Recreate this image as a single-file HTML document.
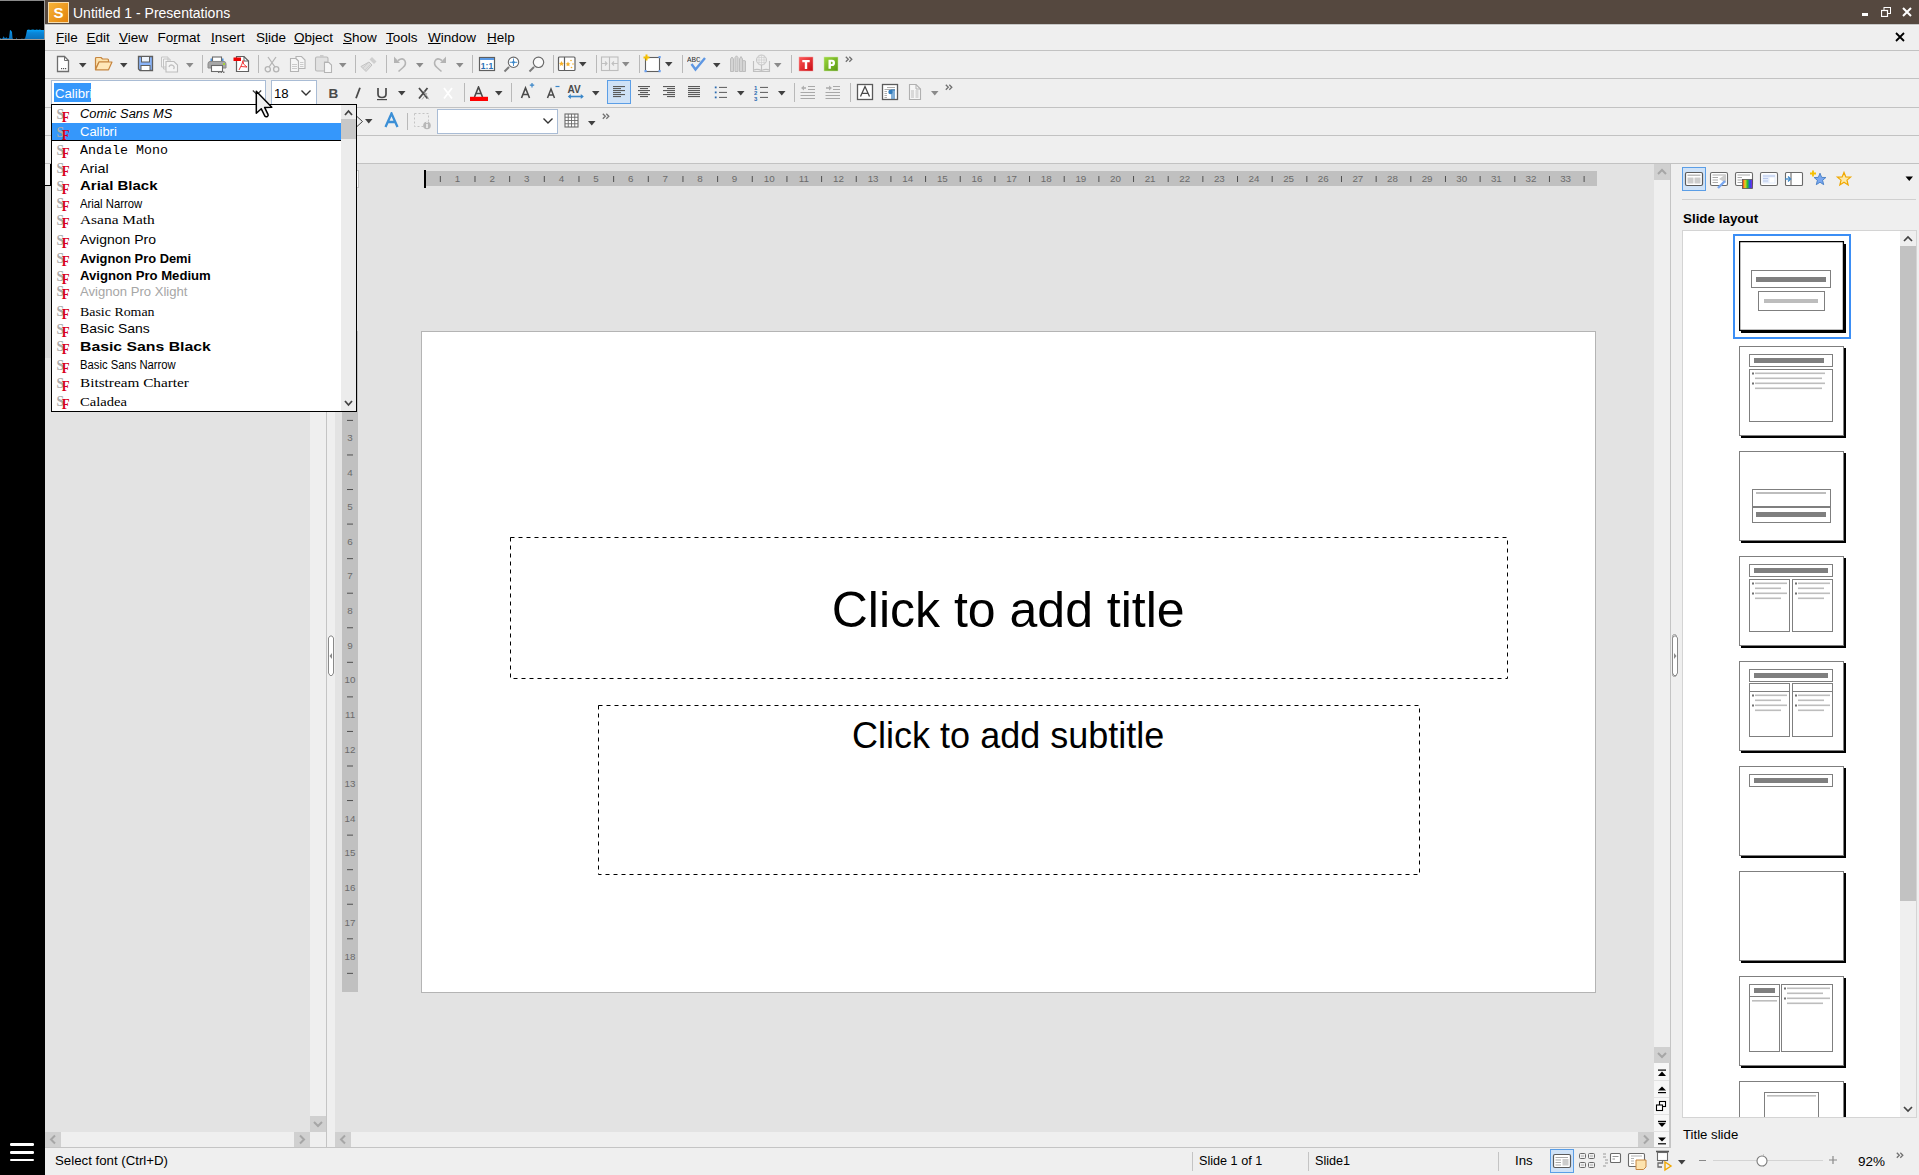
<!DOCTYPE html>
<html><head><meta charset="utf-8"><style>
html,body{margin:0;padding:0;}
body{width:1919px;height:1175px;position:relative;overflow:hidden;background:#efefef;font-family:"Liberation Sans",sans-serif;}
</style></head><body>
<div style="position:absolute;left:0px;top:0px;width:45px;height:1175px;background:#000"></div>
<svg style="position:absolute;left:0px;top:0px;" width="45" height="40" viewBox="0 0 45 40"><defs><linearGradient id="gg" x1="0" y1="0" x2="0" y2="1"><stop offset="0" stop-color="#05a8ff"/><stop offset="0.35" stop-color="#0a86d8"/><stop offset="1" stop-color="#0a72bc"/></linearGradient></defs><rect x="0" y="0" width="45" height="1" fill="#8a8a8a"/><rect x="44" y="0" width="1" height="40" fill="#9a9a9a"/><rect x="0" y="39" width="45" height="1" fill="#a09a94"/><path d="M0 39 L0 38 L1 38.5 L2 39 L3 37.5 L3.5 36 L4 37.5 L6 38 L6.5 37 L7.5 38.5 L9 38 L10 30 L11 30.5 L12 32 L12.5 38 L13 39 L16 39 L16.5 37.5 L17 39 L21 39 L22 38.5 L23 39 L25 38.5 L26 35 L27 30 L29 29.5 L30 30 L33 29.5 L35 30 L37 29.5 L38 30 L40 29.5 L41 30 L44 30 L44 39 Z" fill="url(#gg)"/></svg>
<div style="position:absolute;left:10px;top:1143px;width:24px;height:2.6px;background:#fff;border-radius:1.3px"></div>
<div style="position:absolute;left:10px;top:1151px;width:24px;height:2.6px;background:#fff;border-radius:1.3px"></div>
<div style="position:absolute;left:10px;top:1158.5px;width:24px;height:2.6px;background:#fff;border-radius:1.3px"></div>
<div style="position:absolute;left:45px;top:0px;width:1874px;height:24px;background:#55483f"></div>
<svg style="position:absolute;left:48px;top:2px;" width="21" height="21" viewBox="0 0 21 21"><defs><linearGradient id="sg" x1="0" y1="0" x2="1" y2="1"><stop offset="0" stop-color="#f7b43a"/><stop offset="1" stop-color="#e2820a"/></linearGradient></defs><rect x="0.5" y="0.5" width="20" height="20" fill="url(#sg)" stroke="#f5dcae"/><text x="10.5" y="16" text-anchor="middle" font-family="Liberation Sans" font-weight="bold" font-size="15" fill="#fff">S</text></svg>
<div style="position:absolute;left:73px;top:5.5px;font-size:14px;line-height:14px;color:#fff;white-space:nowrap;">Untitled 1 - Presentations</div>
<div style="position:absolute;left:1862px;top:13px;width:6px;height:3px;background:#fff"></div>
<svg style="position:absolute;left:1881px;top:7px;" width="10" height="10" viewBox="0 0 10 10"><rect x="3" y="0.5" width="6.5" height="6" fill="none" stroke="#fff"/><rect x="0.5" y="3.5" width="6" height="6" fill="#55483f" stroke="#fff" stroke-width="1.2"/></svg>
<svg style="position:absolute;left:1902px;top:7px;" width="10" height="10" viewBox="0 0 10 10"><path d="M1 1 L9 9 M9 1 L1 9" stroke="#fff" stroke-width="2"/></svg>
<div style="position:absolute;left:45px;top:24px;width:1874px;height:26px;background:#efefef"></div>
<div style="position:absolute;left:45px;top:50px;width:1874px;height:1px;background:#c2c2c2"></div>
<div style="position:absolute;left:45px;top:24px;width:1874px;height:1px;background:#c6c7c6"></div>
<div style="position:absolute;left:45px;top:25px;width:1874px;height:1px;background:#f3f3f3"></div>
<div style="position:absolute;left:56px;top:31px;font-size:13.5px;line-height:13.5px;color:#000;white-space:nowrap;"><span style="text-decoration:underline;text-underline-offset:1px">F</span>ile</div>
<div style="position:absolute;left:86.5px;top:31px;font-size:13.5px;line-height:13.5px;color:#000;white-space:nowrap;"><span style="text-decoration:underline;text-underline-offset:1px">E</span>dit</div>
<div style="position:absolute;left:119px;top:31px;font-size:13.5px;line-height:13.5px;color:#000;white-space:nowrap;"><span style="text-decoration:underline;text-underline-offset:1px">V</span>iew</div>
<div style="position:absolute;left:157.5px;top:31px;font-size:13.5px;line-height:13.5px;color:#000;white-space:nowrap;">Fo<span style="text-decoration:underline;text-underline-offset:1px">r</span>mat</div>
<div style="position:absolute;left:211px;top:31px;font-size:13.5px;line-height:13.5px;color:#000;white-space:nowrap;"><span style="text-decoration:underline;text-underline-offset:1px">I</span>nsert</div>
<div style="position:absolute;left:256px;top:31px;font-size:13.5px;line-height:13.5px;color:#000;white-space:nowrap;">S<span style="text-decoration:underline;text-underline-offset:1px">l</span>ide</div>
<div style="position:absolute;left:294px;top:31px;font-size:13.5px;line-height:13.5px;color:#000;white-space:nowrap;"><span style="text-decoration:underline;text-underline-offset:1px">O</span>bject</div>
<div style="position:absolute;left:343px;top:31px;font-size:13.5px;line-height:13.5px;color:#000;white-space:nowrap;"><span style="text-decoration:underline;text-underline-offset:1px">S</span>how</div>
<div style="position:absolute;left:386px;top:31px;font-size:13.5px;line-height:13.5px;color:#000;white-space:nowrap;"><span style="text-decoration:underline;text-underline-offset:1px">T</span>ools</div>
<div style="position:absolute;left:428px;top:31px;font-size:13.5px;line-height:13.5px;color:#000;white-space:nowrap;"><span style="text-decoration:underline;text-underline-offset:1px">W</span>indow</div>
<div style="position:absolute;left:487px;top:31px;font-size:13.5px;line-height:13.5px;color:#000;white-space:nowrap;"><span style="text-decoration:underline;text-underline-offset:1px">H</span>elp</div>
<svg style="position:absolute;left:1895px;top:32px;" width="10" height="10" viewBox="0 0 10 10"><path d="M1 1 L9 9 M9 1 L1 9" stroke="#000" stroke-width="1.8"/></svg>
<div style="position:absolute;left:45px;top:51px;width:1874px;height:112px;background:#efefef"></div>
<div style="position:absolute;left:45px;top:78px;width:1874px;height:1px;background:#c2c2c2"></div>
<div style="position:absolute;left:45px;top:107px;width:1874px;height:1px;background:#c2c2c2"></div>
<div style="position:absolute;left:45px;top:135px;width:1874px;height:1px;background:#c2c2c2"></div>
<div style="position:absolute;left:45px;top:163px;width:1874px;height:1px;background:#c2c2c2"></div>
<div style="position:absolute;left:45px;top:164px;width:265px;height:968px;background:#e3e3e3"></div>
<div style="position:absolute;left:45px;top:164px;width:6px;height:21px;background:#efefef"></div>
<div style="position:absolute;left:50px;top:164px;width:1px;height:22px;background:#000"></div>
<div style="position:absolute;left:45px;top:185px;width:6px;height:1px;background:#000"></div>
<div style="position:absolute;left:45px;top:186px;width:6px;height:172px;background:#d8d8d8"></div>
<div style="position:absolute;left:310px;top:164px;width:16px;height:968px;background:#efefef"></div>
<div style="position:absolute;left:310px;top:1116px;width:16px;height:16px;background:#d0d0d0"></div>
<div style="position:absolute;left:45px;top:1132px;width:265px;height:15px;background:#efefef"></div>
<div style="position:absolute;left:45px;top:1132px;width:16px;height:15px;background:#d0d0d0"></div>
<div style="position:absolute;left:294px;top:1132px;width:16px;height:15px;background:#d0d0d0"></div>
<div style="position:absolute;left:326px;top:164px;width:1px;height:984px;background:#c4c4c4"></div>
<div style="position:absolute;left:327px;top:164px;width:8px;height:984px;background:#efefef"></div>
<div style="position:absolute;left:335px;top:164px;width:1319px;height:968px;background:#e3e3e3"></div>
<div style="position:absolute;left:335px;top:1132px;width:1319px;height:15px;background:#efefef"></div>
<div style="position:absolute;left:335px;top:1132px;width:16px;height:15px;background:#d0d0d0"></div>
<div style="position:absolute;left:1638px;top:1132px;width:16px;height:15px;background:#d0d0d0"></div>
<div style="position:absolute;left:1654px;top:164px;width:16px;height:983px;background:#efefef"></div>
<div style="position:absolute;left:1654px;top:164px;width:16px;height:16px;background:#d0d0d0"></div>
<div style="position:absolute;left:1654px;top:1047px;width:16px;height:16px;background:#d0d0d0"></div>
<div style="position:absolute;left:1670px;top:164px;width:1px;height:984px;background:#c4c4c4"></div>
<div style="position:absolute;left:45px;top:1147px;width:1874px;height:1px;background:#c4c4c4"></div>
<div style="position:absolute;left:45px;top:1148px;width:1874px;height:27px;background:#efefef"></div>
<div style="position:absolute;left:426px;top:171px;width:1171px;height:15px;background:#c0c0c0"></div>
<div style="position:absolute;left:424px;top:170px;width:2px;height:18px;background:#000"></div>
<svg style="position:absolute;left:426px;top:171px;" width="1171" height="15" viewBox="0 0 1171 15"><rect x="13.83" y="5" width="1" height="6" fill="#505050"/><rect x="48.49" y="5" width="1" height="6" fill="#505050"/><rect x="83.15" y="5" width="1" height="6" fill="#505050"/><rect x="117.81" y="5" width="1" height="6" fill="#505050"/><rect x="152.47" y="5" width="1" height="6" fill="#505050"/><rect x="187.13" y="5" width="1" height="6" fill="#505050"/><rect x="221.79" y="5" width="1" height="6" fill="#505050"/><rect x="256.45" y="5" width="1" height="6" fill="#505050"/><rect x="291.11" y="5" width="1" height="6" fill="#505050"/><rect x="325.77" y="5" width="1" height="6" fill="#505050"/><rect x="360.43" y="5" width="1" height="6" fill="#505050"/><rect x="395.09" y="5" width="1" height="6" fill="#505050"/><rect x="429.75" y="5" width="1" height="6" fill="#505050"/><rect x="464.41" y="5" width="1" height="6" fill="#505050"/><rect x="499.07" y="5" width="1" height="6" fill="#505050"/><rect x="533.73" y="5" width="1" height="6" fill="#505050"/><rect x="568.39" y="5" width="1" height="6" fill="#505050"/><rect x="603.05" y="5" width="1" height="6" fill="#505050"/><rect x="637.71" y="5" width="1" height="6" fill="#505050"/><rect x="672.37" y="5" width="1" height="6" fill="#505050"/><rect x="707.03" y="5" width="1" height="6" fill="#505050"/><rect x="741.69" y="5" width="1" height="6" fill="#505050"/><rect x="776.35" y="5" width="1" height="6" fill="#505050"/><rect x="811.01" y="5" width="1" height="6" fill="#505050"/><rect x="845.67" y="5" width="1" height="6" fill="#505050"/><rect x="880.33" y="5" width="1" height="6" fill="#505050"/><rect x="914.99" y="5" width="1" height="6" fill="#505050"/><rect x="949.65" y="5" width="1" height="6" fill="#505050"/><rect x="984.31" y="5" width="1" height="6" fill="#505050"/><rect x="1018.97" y="5" width="1" height="6" fill="#505050"/><rect x="1053.63" y="5" width="1" height="6" fill="#505050"/><rect x="1088.29" y="5" width="1" height="6" fill="#505050"/><rect x="1122.95" y="5" width="1" height="6" fill="#505050"/><rect x="1157.61" y="5" width="1" height="6" fill="#505050"/><text x="31.60" y="11" text-anchor="middle" font-family="Liberation Sans" font-size="9.8" fill="#6b6b6b">1</text><text x="66.23" y="11" text-anchor="middle" font-family="Liberation Sans" font-size="9.8" fill="#6b6b6b">2</text><text x="100.85" y="11" text-anchor="middle" font-family="Liberation Sans" font-size="9.8" fill="#6b6b6b">3</text><text x="135.48" y="11" text-anchor="middle" font-family="Liberation Sans" font-size="9.8" fill="#6b6b6b">4</text><text x="170.10" y="11" text-anchor="middle" font-family="Liberation Sans" font-size="9.8" fill="#6b6b6b">5</text><text x="204.73" y="11" text-anchor="middle" font-family="Liberation Sans" font-size="9.8" fill="#6b6b6b">6</text><text x="239.35" y="11" text-anchor="middle" font-family="Liberation Sans" font-size="9.8" fill="#6b6b6b">7</text><text x="273.98" y="11" text-anchor="middle" font-family="Liberation Sans" font-size="9.8" fill="#6b6b6b">8</text><text x="308.60" y="11" text-anchor="middle" font-family="Liberation Sans" font-size="9.8" fill="#6b6b6b">9</text><text x="343.23" y="11" text-anchor="middle" font-family="Liberation Sans" font-size="9.8" fill="#6b6b6b">10</text><text x="377.85" y="11" text-anchor="middle" font-family="Liberation Sans" font-size="9.8" fill="#6b6b6b">11</text><text x="412.48" y="11" text-anchor="middle" font-family="Liberation Sans" font-size="9.8" fill="#6b6b6b">12</text><text x="447.10" y="11" text-anchor="middle" font-family="Liberation Sans" font-size="9.8" fill="#6b6b6b">13</text><text x="481.73" y="11" text-anchor="middle" font-family="Liberation Sans" font-size="9.8" fill="#6b6b6b">14</text><text x="516.35" y="11" text-anchor="middle" font-family="Liberation Sans" font-size="9.8" fill="#6b6b6b">15</text><text x="550.98" y="11" text-anchor="middle" font-family="Liberation Sans" font-size="9.8" fill="#6b6b6b">16</text><text x="585.60" y="11" text-anchor="middle" font-family="Liberation Sans" font-size="9.8" fill="#6b6b6b">17</text><text x="620.22" y="11" text-anchor="middle" font-family="Liberation Sans" font-size="9.8" fill="#6b6b6b">18</text><text x="654.85" y="11" text-anchor="middle" font-family="Liberation Sans" font-size="9.8" fill="#6b6b6b">19</text><text x="689.47" y="11" text-anchor="middle" font-family="Liberation Sans" font-size="9.8" fill="#6b6b6b">20</text><text x="724.10" y="11" text-anchor="middle" font-family="Liberation Sans" font-size="9.8" fill="#6b6b6b">21</text><text x="758.72" y="11" text-anchor="middle" font-family="Liberation Sans" font-size="9.8" fill="#6b6b6b">22</text><text x="793.35" y="11" text-anchor="middle" font-family="Liberation Sans" font-size="9.8" fill="#6b6b6b">23</text><text x="827.97" y="11" text-anchor="middle" font-family="Liberation Sans" font-size="9.8" fill="#6b6b6b">24</text><text x="862.60" y="11" text-anchor="middle" font-family="Liberation Sans" font-size="9.8" fill="#6b6b6b">25</text><text x="897.22" y="11" text-anchor="middle" font-family="Liberation Sans" font-size="9.8" fill="#6b6b6b">26</text><text x="931.85" y="11" text-anchor="middle" font-family="Liberation Sans" font-size="9.8" fill="#6b6b6b">27</text><text x="966.47" y="11" text-anchor="middle" font-family="Liberation Sans" font-size="9.8" fill="#6b6b6b">28</text><text x="1001.10" y="11" text-anchor="middle" font-family="Liberation Sans" font-size="9.8" fill="#6b6b6b">29</text><text x="1035.72" y="11" text-anchor="middle" font-family="Liberation Sans" font-size="9.8" fill="#6b6b6b">30</text><text x="1070.35" y="11" text-anchor="middle" font-family="Liberation Sans" font-size="9.8" fill="#6b6b6b">31</text><text x="1104.97" y="11" text-anchor="middle" font-family="Liberation Sans" font-size="9.8" fill="#6b6b6b">32</text><text x="1139.60" y="11" text-anchor="middle" font-family="Liberation Sans" font-size="9.8" fill="#6b6b6b">33</text></svg>
<div style="position:absolute;left:356.5px;top:170px;width:2.5px;height:18px;background:#fff;border:1px solid #c0c0c0;border-left:none;box-sizing:border-box"></div>
<div style="position:absolute;left:342px;top:331px;width:16px;height:661px;background:#c0c0c0"></div>
<svg style="position:absolute;left:342px;top:331px;" width="16" height="661" viewBox="0 0 16 661"><rect x="5" y="19.78" width="6" height="1" fill="#505050"/><rect x="5" y="54.34" width="6" height="1" fill="#505050"/><rect x="5" y="88.90" width="6" height="1" fill="#505050"/><rect x="5" y="123.46" width="6" height="1" fill="#505050"/><rect x="5" y="158.02" width="6" height="1" fill="#505050"/><rect x="5" y="192.58" width="6" height="1" fill="#505050"/><rect x="5" y="227.14" width="6" height="1" fill="#505050"/><rect x="5" y="261.70" width="6" height="1" fill="#505050"/><rect x="5" y="296.26" width="6" height="1" fill="#505050"/><rect x="5" y="330.82" width="6" height="1" fill="#505050"/><rect x="5" y="365.38" width="6" height="1" fill="#505050"/><rect x="5" y="399.94" width="6" height="1" fill="#505050"/><rect x="5" y="434.50" width="6" height="1" fill="#505050"/><rect x="5" y="469.06" width="6" height="1" fill="#505050"/><rect x="5" y="503.62" width="6" height="1" fill="#505050"/><rect x="5" y="538.18" width="6" height="1" fill="#505050"/><rect x="5" y="572.74" width="6" height="1" fill="#505050"/><rect x="5" y="607.30" width="6" height="1" fill="#505050"/><rect x="5" y="641.86" width="6" height="1" fill="#505050"/><text x="8" y="40.76" text-anchor="middle" font-family="Liberation Sans" font-size="9.8" fill="#6b6b6b">1</text><text x="8" y="75.38" text-anchor="middle" font-family="Liberation Sans" font-size="9.8" fill="#6b6b6b">2</text><text x="8" y="110.00" text-anchor="middle" font-family="Liberation Sans" font-size="9.8" fill="#6b6b6b">3</text><text x="8" y="144.62" text-anchor="middle" font-family="Liberation Sans" font-size="9.8" fill="#6b6b6b">4</text><text x="8" y="179.24" text-anchor="middle" font-family="Liberation Sans" font-size="9.8" fill="#6b6b6b">5</text><text x="8" y="213.86" text-anchor="middle" font-family="Liberation Sans" font-size="9.8" fill="#6b6b6b">6</text><text x="8" y="248.48" text-anchor="middle" font-family="Liberation Sans" font-size="9.8" fill="#6b6b6b">7</text><text x="8" y="283.10" text-anchor="middle" font-family="Liberation Sans" font-size="9.8" fill="#6b6b6b">8</text><text x="8" y="317.72" text-anchor="middle" font-family="Liberation Sans" font-size="9.8" fill="#6b6b6b">9</text><text x="8" y="352.34" text-anchor="middle" font-family="Liberation Sans" font-size="9.8" fill="#6b6b6b">10</text><text x="8" y="386.96" text-anchor="middle" font-family="Liberation Sans" font-size="9.8" fill="#6b6b6b">11</text><text x="8" y="421.58" text-anchor="middle" font-family="Liberation Sans" font-size="9.8" fill="#6b6b6b">12</text><text x="8" y="456.20" text-anchor="middle" font-family="Liberation Sans" font-size="9.8" fill="#6b6b6b">13</text><text x="8" y="490.82" text-anchor="middle" font-family="Liberation Sans" font-size="9.8" fill="#6b6b6b">14</text><text x="8" y="525.44" text-anchor="middle" font-family="Liberation Sans" font-size="9.8" fill="#6b6b6b">15</text><text x="8" y="560.06" text-anchor="middle" font-family="Liberation Sans" font-size="9.8" fill="#6b6b6b">16</text><text x="8" y="594.68" text-anchor="middle" font-family="Liberation Sans" font-size="9.8" fill="#6b6b6b">17</text><text x="8" y="629.30" text-anchor="middle" font-family="Liberation Sans" font-size="9.8" fill="#6b6b6b">18</text></svg>
<div style="position:absolute;left:421px;top:331px;width:1175px;height:662px;background:#fff;border:1px solid #b4b4b4;box-sizing:border-box"></div>
<svg style="position:absolute;left:505px;top:530px;" width="1010" height="350" viewBox="0 0 1010 350"><rect x="5.5" y="7.5" width="997" height="141" fill="none" stroke="#000" stroke-width="1" stroke-dasharray="4 4"/><rect x="93.5" y="175.5" width="821" height="169" fill="none" stroke="#000" stroke-width="1" stroke-dasharray="4 4"/></svg>
<div style="position:absolute;left:608.2px;width:800px;text-align:center;top:585.17px;font-size:50px;line-height:50px;color:#000;white-space:nowrap;">Click to add title</div>
<div style="position:absolute;left:608.2px;width:800px;text-align:center;top:717.83px;font-size:36px;line-height:36px;color:#000;white-space:nowrap;">Click to add subtitle</div>
<div style="position:absolute;left:1671px;top:164px;width:248px;height:984px;background:#efefef"></div>
<div style="position:absolute;left:1671px;top:164px;width:248px;height:984px;background:#efefef"></div>
<div style="position:absolute;left:1682px;top:167px;width:24px;height:24px;background:#cfe2f7;border:1px solid #5b9ee6;box-sizing:border-box"></div>
<svg style="position:absolute;left:1684px;top:171px;" width="20" height="17" viewBox="0 0 20 17"><rect x="1.5" y="1.5" width="17" height="13" rx="1.5" fill="#fff" stroke="#5a5a5a" stroke-width="1.2"/><rect x="3.5" y="3.5" width="13" height="1.5" fill="#bbb"/><rect x="3.5" y="6.5" width="6" height="6" fill="#ccc"/><rect x="10.5" y="6.5" width="6" height="6" fill="#ccc"/></svg>
<svg style="position:absolute;left:1709px;top:171px;" width="20" height="19" viewBox="0 0 20 19"><rect x="1.5" y="1.5" width="17" height="13" rx="1.5" fill="#fff" stroke="#6a6a6a" stroke-width="1.1"/><path d="M3.5 4 H16 M3.5 6.5 H9 M3.5 9 H9 M3.5 11.5 H9" stroke="#aaa" stroke-width="1"/><path d="M10 8 L17 3 V12 Z" fill="#ccc"/><path d="M9 17 L16 10" stroke="#7aa8f0" stroke-width="2.4"/></svg>
<svg style="position:absolute;left:1734px;top:171px;" width="20" height="19" viewBox="0 0 20 19"><rect x="1.5" y="1.5" width="17" height="13" rx="1.5" fill="#fff" stroke="#6a6a6a" stroke-width="1.1"/><path d="M3.5 4 H16 M3.5 6.5 H8 M3.5 9 H8 M3.5 11.5 H8" stroke="#aaa" stroke-width="1"/><defs><linearGradient id="rb" x1="0" x2="1"><stop offset="0" stop-color="#f02020"/><stop offset="0.25" stop-color="#f0d020"/><stop offset="0.5" stop-color="#30c030"/><stop offset="0.75" stop-color="#2050f0"/><stop offset="1" stop-color="#a020d0"/></linearGradient></defs><rect x="8.5" y="8.5" width="10" height="9" fill="url(#rb)" stroke="#555" stroke-width="0.8"/></svg>
<svg style="position:absolute;left:1759px;top:171px;" width="20" height="17" viewBox="0 0 20 17"><rect x="1.5" y="1.5" width="17" height="13" rx="1.5" fill="#fff" stroke="#6a6a6a" stroke-width="1.1"/><rect x="3.5" y="3.5" width="13" height="9" fill="#e4ecfb"/><path d="M4 5 H16 M4 7.5 H9 M4 10 H9" stroke="#b8c8ec" stroke-width="1"/><rect x="10.5" y="6.5" width="5" height="5" fill="#fff"/></svg>
<svg style="position:absolute;left:1784px;top:171px;" width="20" height="17" viewBox="0 0 20 17"><rect x="1.5" y="1.5" width="17" height="13" rx="1" fill="#fff" stroke="#6a6a6a" stroke-width="1.1"/><path d="M7 1.5 V14.5" stroke="#6a6a6a" stroke-width="1.1"/><path d="M1 8 H6" stroke="#3a86c8" stroke-width="1.3"/><path d="M4 5.5 L6.5 8 L4 10.5" fill="none" stroke="#3a86c8" stroke-width="1.3"/></svg>
<svg style="position:absolute;left:1809px;top:170px;" width="19" height="18" viewBox="0 0 19 18"><g transform="translate(11 9) scale(0.9) translate(-11 -9)"><path d="M11 2.5 L12.9 7.2 L17.5 7.4 L13.9 10.4 L15.1 15.3 L11 12.6 L6.9 15.3 L8.1 10.4 L4.5 7.4 L9.1 7.2 Z" fill="#7aa8f0" stroke="#3a76c0" stroke-width="0.9"/></g><path d="M4 0.5 V6.5 M1 3.5 H7" stroke="#f5c000" stroke-width="1.8"/></svg>
<svg style="position:absolute;left:1835px;top:170px;" width="18" height="18" viewBox="0 0 18 18"><g transform="translate(9 9) scale(0.88) translate(-9 -9)"><path d="M9 1.5 L11.1 6.6 L16.5 6.9 L12.4 10.3 L13.7 15.7 L9 12.7 L4.3 15.7 L5.6 10.3 L1.5 6.9 L6.9 6.6 Z" fill="#fde9a8" stroke="#f0a800" stroke-width="1.4"/></g></svg>
<svg style="position:absolute;left:1905px;top:176px;" width="9" height="6" viewBox="0 0 9 6"><path d="M0.5 0.5 H8 L4.25 5 Z" fill="#000"/></svg>
<div style="position:absolute;left:1682px;top:199px;width:234px;height:1px;background:#d0d0d0"></div>
<div style="position:absolute;left:1683px;top:211.56px;font-size:13.4px;line-height:13.4px;color:#000;white-space:nowrap;font-weight:bold">Slide layout</div>
<div style="position:absolute;left:1682px;top:230px;width:235px;height:888px;background:#fff;border:1px solid #d4d4d4;box-sizing:border-box"></div>
<div style="position:absolute;left:1900px;top:231px;width:16px;height:886px;background:#efefef"></div>
<div style="position:absolute;left:1900px;top:246px;width:16px;height:655px;background:#c2c2c2"></div>
<svg style="position:absolute;left:1900px;top:232px;" width="16" height="14" viewBox="0 0 16 14"><path d="M4 9 L8 5 L12 9" fill="none" stroke="#444" stroke-width="1.7"/></svg>
<svg style="position:absolute;left:1900px;top:1102px;" width="16" height="14" viewBox="0 0 16 14"><path d="M4 5 L8 9 L12 5" fill="none" stroke="#444" stroke-width="1.7"/></svg>
<div style="position:absolute;left:1683px;top:231px;width:217px;height:886px;overflow:hidden"><div style="position:absolute;left:50px;top:3px;width:118px;height:105px;border:2px solid #3b8ef5;box-sizing:border-box"></div><svg style="position:absolute;left:56px;top:10px;" width="108" height="93" viewBox="0 0 108 93"><rect x="2" y="3" width="105" height="89" fill="#000"/><rect x="0.6" y="0.6" width="103.8" height="88.8" fill="#fff" stroke="#000" stroke-width="1.3"/><rect x="12.5" y="29.5" width="79" height="17" fill="none" stroke="#7f7f7f" stroke-width="1"/><rect x="17" y="36" width="70" height="5" fill="#7f7f7f"/><rect x="19.5" y="50.5" width="66" height="19" fill="none" stroke="#7f7f7f" stroke-width="1"/><rect x="25" y="58" width="54" height="4" fill="#bdbdbd"/></svg><svg style="position:absolute;left:56px;top:115px;" width="108" height="93" viewBox="0 0 108 93"><rect x="2" y="2" width="105" height="90" fill="#000"/><rect x="0.5" y="0.5" width="104" height="89" fill="#fff" stroke="#7f7f7f" stroke-width="1"/><rect x="10.5" y="8.5" width="83" height="12" fill="none" stroke="#7f7f7f" stroke-width="1"/><rect x="15" y="12" width="70" height="5" fill="#7f7f7f"/><rect x="10.5" y="23.5" width="83" height="52" fill="none" stroke="#7f7f7f" stroke-width="1"/><rect x="13" y="26.5" width="2" height="2" fill="#707070"/><rect x="16" y="26.5" width="70" height="1.6" fill="#bdbdbd"/><rect x="16" y="31.5" width="67" height="1.6" fill="#bdbdbd"/><rect x="13" y="36.5" width="2" height="2" fill="#707070"/><rect x="16" y="36.5" width="70" height="1.6" fill="#bdbdbd"/><rect x="16" y="41.5" width="67" height="1.6" fill="#bdbdbd"/></svg><svg style="position:absolute;left:56px;top:220px;" width="108" height="93" viewBox="0 0 108 93"><rect x="2" y="2" width="105" height="90" fill="#000"/><rect x="0.5" y="0.5" width="104" height="89" fill="#fff" stroke="#7f7f7f" stroke-width="1"/><rect x="13.5" y="38.5" width="78" height="17" fill="none" stroke="#7f7f7f" stroke-width="1"/><rect x="17" y="41" width="70" height="2" fill="#bdbdbd"/><rect x="13.5" y="56.5" width="78" height="15" fill="none" stroke="#7f7f7f" stroke-width="1"/><rect x="17" y="61" width="70" height="5" fill="#7f7f7f"/></svg><svg style="position:absolute;left:56px;top:325px;" width="108" height="93" viewBox="0 0 108 93"><rect x="2" y="2" width="105" height="90" fill="#000"/><rect x="0.5" y="0.5" width="104" height="89" fill="#fff" stroke="#7f7f7f" stroke-width="1"/><rect x="10.5" y="8.5" width="83" height="12" fill="none" stroke="#7f7f7f" stroke-width="1"/><rect x="15" y="12" width="74" height="5" fill="#7f7f7f"/><rect x="10.5" y="23.5" width="40" height="52" fill="none" stroke="#7f7f7f" stroke-width="1"/><rect x="53.5" y="23.5" width="40" height="52" fill="none" stroke="#7f7f7f" stroke-width="1"/><rect x="13" y="26.5" width="2" height="2" fill="#707070"/><rect x="16" y="26.5" width="32" height="1.6" fill="#bdbdbd"/><rect x="16" y="31.5" width="26" height="1.6" fill="#bdbdbd"/><rect x="13" y="36.5" width="2" height="2" fill="#707070"/><rect x="16" y="36.5" width="32" height="1.6" fill="#bdbdbd"/><rect x="16" y="41.5" width="26" height="1.6" fill="#bdbdbd"/><rect x="56" y="26.5" width="2" height="2" fill="#707070"/><rect x="59" y="26.5" width="32" height="1.6" fill="#bdbdbd"/><rect x="59" y="31.5" width="26" height="1.6" fill="#bdbdbd"/><rect x="56" y="36.5" width="2" height="2" fill="#707070"/><rect x="59" y="36.5" width="32" height="1.6" fill="#bdbdbd"/><rect x="59" y="41.5" width="26" height="1.6" fill="#bdbdbd"/></svg><svg style="position:absolute;left:56px;top:430px;" width="108" height="93" viewBox="0 0 108 93"><rect x="2" y="2" width="105" height="90" fill="#000"/><rect x="0.5" y="0.5" width="104" height="89" fill="#fff" stroke="#7f7f7f" stroke-width="1"/><rect x="10.5" y="8.5" width="83" height="12" fill="none" stroke="#7f7f7f" stroke-width="1"/><rect x="15" y="12" width="74" height="5" fill="#7f7f7f"/><rect x="10.5" y="22.5" width="40" height="8" fill="none" stroke="#7f7f7f" stroke-width="1"/><rect x="10.5" y="30.5" width="40" height="45" fill="none" stroke="#7f7f7f" stroke-width="1"/><rect x="53.5" y="22.5" width="40" height="8" fill="none" stroke="#7f7f7f" stroke-width="1"/><rect x="53.5" y="30.5" width="40" height="45" fill="none" stroke="#7f7f7f" stroke-width="1"/><rect x="13" y="33.5" width="2" height="2" fill="#707070"/><rect x="16" y="33.5" width="32" height="1.6" fill="#bdbdbd"/><rect x="16" y="38.5" width="26" height="1.6" fill="#bdbdbd"/><rect x="13" y="43.5" width="2" height="2" fill="#707070"/><rect x="16" y="43.5" width="32" height="1.6" fill="#bdbdbd"/><rect x="16" y="48.5" width="26" height="1.6" fill="#bdbdbd"/><rect x="56" y="33.5" width="2" height="2" fill="#707070"/><rect x="59" y="33.5" width="32" height="1.6" fill="#bdbdbd"/><rect x="59" y="38.5" width="26" height="1.6" fill="#bdbdbd"/><rect x="56" y="43.5" width="2" height="2" fill="#707070"/><rect x="59" y="43.5" width="32" height="1.6" fill="#bdbdbd"/><rect x="59" y="48.5" width="26" height="1.6" fill="#bdbdbd"/></svg><svg style="position:absolute;left:56px;top:535px;" width="108" height="93" viewBox="0 0 108 93"><rect x="2" y="2" width="105" height="90" fill="#000"/><rect x="0.5" y="0.5" width="104" height="89" fill="#fff" stroke="#7f7f7f" stroke-width="1"/><rect x="10.5" y="8.5" width="83" height="12" fill="none" stroke="#7f7f7f" stroke-width="1"/><rect x="15" y="12" width="74" height="5" fill="#7f7f7f"/></svg><svg style="position:absolute;left:56px;top:640px;" width="108" height="93" viewBox="0 0 108 93"><rect x="2" y="2" width="105" height="90" fill="#000"/><rect x="0.5" y="0.5" width="104" height="89" fill="#fff" stroke="#7f7f7f" stroke-width="1"/></svg><svg style="position:absolute;left:56px;top:745px;" width="108" height="93" viewBox="0 0 108 93"><rect x="2" y="2" width="105" height="90" fill="#000"/><rect x="0.5" y="0.5" width="104" height="89" fill="#fff" stroke="#7f7f7f" stroke-width="1"/><rect x="10.5" y="8.5" width="30" height="12" fill="none" stroke="#7f7f7f" stroke-width="1"/><rect x="15" y="12" width="21" height="5" fill="#7f7f7f"/><rect x="10.5" y="20.5" width="30" height="55" fill="none" stroke="#7f7f7f" stroke-width="1"/><rect x="13" y="24" width="25" height="1.6" fill="#bdbdbd"/><rect x="42.5" y="8.5" width="51" height="67" fill="none" stroke="#7f7f7f" stroke-width="1"/><rect x="45" y="11.5" width="2" height="2" fill="#707070"/><rect x="48" y="11.5" width="43" height="1.6" fill="#bdbdbd"/><rect x="48" y="16.5" width="36" height="1.6" fill="#bdbdbd"/><rect x="45" y="21.5" width="2" height="2" fill="#707070"/><rect x="48" y="21.5" width="43" height="1.6" fill="#bdbdbd"/><rect x="48" y="26.5" width="36" height="1.6" fill="#bdbdbd"/></svg><svg style="position:absolute;left:56px;top:850px;" width="108" height="93" viewBox="0 0 108 93"><rect x="2" y="2" width="105" height="90" fill="#000"/><rect x="0.5" y="0.5" width="104" height="89" fill="#fff" stroke="#7f7f7f" stroke-width="1"/><rect x="25.5" y="11.5" width="54" height="79" fill="none" stroke="#7f7f7f" stroke-width="1"/><rect x="28" y="14" width="49" height="1.6" fill="#bdbdbd"/></svg></div>
<div style="position:absolute;left:1683px;top:1128.43px;font-size:13.2px;line-height:13.2px;color:#000;white-space:nowrap;">Title slide</div>
<div style="position:absolute;left:1672px;top:634px;width:5px;height:43px;background:#fff;border:1px solid #9a9a9a;border-radius:3px;box-sizing:border-box"></div>
<svg style="position:absolute;left:310px;top:1116px;" width="16" height="16" viewBox="0 0 16 16"><path d="M4.0 6.0 L8.0 10.0 L12.0 6.0" fill="none" stroke="#a6a6a6" stroke-width="2"/></svg>
<svg style="position:absolute;left:45px;top:1132px;" width="16" height="15" viewBox="0 0 16 15"><path d="M10.0 3.5 L6.0 7.5 L10.0 11.5" fill="none" stroke="#a6a6a6" stroke-width="2"/></svg>
<svg style="position:absolute;left:294px;top:1132px;" width="16" height="15" viewBox="0 0 16 15"><path d="M6.0 3.5 L10.0 7.5 L6.0 11.5" fill="none" stroke="#a6a6a6" stroke-width="2"/></svg>
<svg style="position:absolute;left:335px;top:1132px;" width="16" height="15" viewBox="0 0 16 15"><path d="M10.0 3.5 L6.0 7.5 L10.0 11.5" fill="none" stroke="#a6a6a6" stroke-width="2"/></svg>
<svg style="position:absolute;left:1638px;top:1132px;" width="16" height="15" viewBox="0 0 16 15"><path d="M6.0 3.5 L10.0 7.5 L6.0 11.5" fill="none" stroke="#a6a6a6" stroke-width="2"/></svg>
<svg style="position:absolute;left:1654px;top:164px;" width="16" height="16" viewBox="0 0 16 16"><path d="M4.0 10.0 L8.0 6.0 L12.0 10.0" fill="none" stroke="#a6a6a6" stroke-width="2"/></svg>
<svg style="position:absolute;left:1654px;top:1047px;" width="16" height="16" viewBox="0 0 16 16"><path d="M4.0 6.0 L8.0 10.0 L12.0 6.0" fill="none" stroke="#a6a6a6" stroke-width="2"/></svg>
<svg style="position:absolute;left:327px;top:635px;" width="8" height="42" viewBox="0 0 8 42"><path d="M1.5 3 L3 1 H5 L6.5 3 V38 L5 40.5 H3 L1.5 38 Z" fill="#fff" stroke="#8a8a8a" stroke-width="1"/><path d="M5 18 L2.5 21 L5 24 Z" fill="#8a8a8a"/></svg>
<svg style="position:absolute;left:1671px;top:635px;" width="8" height="42" viewBox="0 0 8 42"><path d="M1.5 3 L3 1 H5 L6.5 3 V38 L5 40.5 H3 L1.5 38 Z" fill="#fff" stroke="#8a8a8a" stroke-width="1"/><path d="M3 18 L5.5 21 L3 24 Z" fill="#8a8a8a"/></svg>
<div style="position:absolute;left:1654px;top:1063px;width:16px;height:84px;background:#f7f7f7"></div>
<div style="position:absolute;left:1654px;top:1080px;width:16px;height:1px;background:#e2e2e2"></div>
<div style="position:absolute;left:1654px;top:1097px;width:16px;height:1px;background:#e2e2e2"></div>
<div style="position:absolute;left:1654px;top:1114px;width:16px;height:1px;background:#e2e2e2"></div>
<div style="position:absolute;left:1654px;top:1131px;width:16px;height:1px;background:#e2e2e2"></div>
<div style="position:absolute;left:1669px;top:1063px;width:1px;height:84px;background:#c8c8c8"></div>
<svg style="position:absolute;left:1654px;top:1063px;" width="16" height="84" viewBox="0 0 16 84"><rect x="4" y="6.5" width="8" height="1.2" fill="#000"/><path d="M4 13 L8 8.6 L12 13 Z" fill="#000"/><path d="M4 27.5 L8 23.5 L12 27.5 Z" fill="#000"/><rect x="4" y="29" width="8" height="1.2" fill="#000"/><rect x="5.5" y="38.5" width="6" height="5" fill="#fff" stroke="#000" stroke-width="1.1"/><rect x="2.5" y="42" width="6" height="5.5" fill="#fff" stroke="#000" stroke-width="1.1"/><rect x="4" y="57.8" width="8" height="1.2" fill="#000"/><path d="M4 59.8 L8 64 L12 59.8 Z" fill="#000"/><path d="M4 74.5 L8 78.5 L12 74.5 Z" fill="#000"/><rect x="4" y="80.2" width="8" height="1.2" fill="#000"/></svg>
<div style="position:absolute;left:55px;top:1153.78px;font-size:13.26px;line-height:13.26px;color:#000;white-space:nowrap;">Select font (Ctrl+D)</div>
<div style="position:absolute;left:1192px;top:1152px;width:1px;height:19px;background:#c4c4c4"></div>
<div style="position:absolute;left:1308px;top:1152px;width:1px;height:19px;background:#c4c4c4"></div>
<div style="position:absolute;left:1498px;top:1152px;width:1px;height:19px;background:#c4c4c4"></div>
<div style="position:absolute;left:1199px;top:1153.74px;font-size:13.3px;line-height:13.3px;color:#000;white-space:nowrap;transform:scaleX(0.95);transform-origin:0 0">Slide 1 of 1</div>
<div style="position:absolute;left:1315px;top:1153.74px;font-size:13.3px;line-height:13.3px;color:#000;white-space:nowrap;transform:scaleX(0.95);transform-origin:0 0">Slide1</div>
<div style="position:absolute;left:1515px;top:1153.74px;font-size:13.3px;line-height:13.3px;color:#000;white-space:nowrap;">Ins</div>
<div style="position:absolute;left:1550px;top:1149px;width:24px;height:24px;background:#cfe2f7;border:1px solid #5b9ee6;box-sizing:border-box"></div>
<svg style="position:absolute;left:1552px;top:1152px;" width="20" height="17" viewBox="0 0 20 17"><rect x="1.5" y="2.5" width="17" height="13" rx="1.5" fill="#fff" stroke="#5a5a5a" stroke-width="1.2"/><path d="M3.5 5.5 H16 M3.5 8 H9 M3.5 10.5 H9 M3.5 13 H9" stroke="#aaa" stroke-width="1"/><rect x="10.5" y="7" width="6" height="6.5" fill="#ccc"/></svg>
<svg style="position:absolute;left:1578px;top:1152px;" width="18" height="17" viewBox="0 0 18 17"><rect x="1.5" y="1.5" width="6" height="5" rx="1" fill="none" stroke="#6a6a6a"/><rect x="10.5" y="1.5" width="6" height="5" rx="1" fill="none" stroke="#6a6a6a"/><rect x="1.5" y="10.5" width="6" height="5" rx="1" fill="none" stroke="#6a6a6a"/><rect x="10.5" y="10.5" width="6" height="5" rx="1" fill="none" stroke="#6a6a6a"/><path d="M3 4 H6 M12 4 H15 M3 13 H6 M12 13 H15" stroke="#999" stroke-width="0.8"/></svg>
<svg style="position:absolute;left:1602px;top:1152px;" width="20" height="17" viewBox="0 0 20 17"><path d="M1 2 H4 M1 5 H4 M3 8 H6 M3 11 H6 M1 14 H4" stroke="#999" stroke-width="1"/><rect x="8.5" y="1.5" width="10" height="9" rx="1" fill="#fff" stroke="#6a6a6a" stroke-width="1.1"/><path d="M10.5 4.5 H16.5 M10.5 7 H13" stroke="#888" stroke-width="0.9"/></svg>
<svg style="position:absolute;left:1627px;top:1152px;" width="20" height="18" viewBox="0 0 20 18"><rect x="1.5" y="1.5" width="16" height="13" rx="1.2" fill="#fff" stroke="#6a6a6a" stroke-width="1.1"/><path d="M4 4 H15 M4 6.5 H7 M4 9 H7 M4 11.5 H7" stroke="#aaa" stroke-width="0.9"/><path d="M9 8 H19 V15 L16.5 17.5 H9 Z" fill="#fde3ae" stroke="#c68640" stroke-width="1"/></svg>
<svg style="position:absolute;left:1654px;top:1150px;" width="20" height="22" viewBox="0 0 20 22"><path d="M2 1.5 H15" stroke="#5a5a5a" stroke-width="1.6"/><rect x="3.5" y="2.5" width="10" height="8" fill="#fff" stroke="#6a6a6a" stroke-width="1.1"/><path d="M8.5 10.5 V13 H4 V17 H8" fill="none" stroke="#6a6a6a" stroke-width="1.3"/><path d="M11 12 L17 16 L11 20 Z" fill="none" stroke="#f0a800" stroke-width="1.4"/></svg>
<svg style="position:absolute;left:1678px;top:1160px;" width="8" height="5" viewBox="0 0 8 5"><path d="M0 0 H7.5 L3.75 4.5 Z" fill="#404040"/></svg>
<div style="position:absolute;left:1699px;top:1160px;width:7px;height:1.2px;background:#8a8a8a"></div>
<div style="position:absolute;left:1713px;top:1160px;width:110px;height:1px;background:#d4d4d4"></div>
<div style="position:absolute;left:1763px;top:1154px;width:1px;height:13px;background:#c8c8c8"></div>
<svg style="position:absolute;left:1756px;top:1155px;" width="12" height="12" viewBox="0 0 12 12"><circle cx="6" cy="6" r="5" fill="#fff" stroke="#7a7a7a" stroke-width="1.1"/></svg>
<svg style="position:absolute;left:1828px;top:1155px;" width="10" height="10" viewBox="0 0 10 10"><path d="M5 1 V9 M1 5 H9" stroke="#8a8a8a" stroke-width="1.2"/></svg>
<div style="position:absolute;left:1858px;top:1154.57px;font-size:13.5px;line-height:13.5px;color:#000;white-space:nowrap;">92%</div>
<svg style="position:absolute;left:1896px;top:1152px;" width="9" height="7" viewBox="0 0 9 7"><path d="M0.8 0.8 L3.3 3.3 L0.8 5.8 M4.3 0.8 L6.8 3.3 L4.3 5.8" fill="none" stroke="#707070" stroke-width="1.3"/></svg>
<svg style="position:absolute;left:56px;top:55px;" width="14" height="18" viewBox="0 0 14 18"><path d="M1.5 1.5 H8.5 L12.5 5.5 V16.5 H1.5 Z" fill="#fff" stroke="#6e6e6e" stroke-width="1.3"/><path d="M8.5 1.5 V5.5 H12.5" fill="none" stroke="#6e6e6e" stroke-width="1"/><rect x="5" y="13" width="1.2" height="1.2" fill="#555"/><rect x="7" y="13" width="1.2" height="1.2" fill="#555"/><rect x="9" y="13" width="1.2" height="1.2" fill="#555"/></svg>
<svg style="position:absolute;left:79px;top:63px;" width="8" height="5" viewBox="0 0 8 5"><path d="M0 0 H7.5 L3.75 4.5 Z" fill="#404040"/></svg>
<svg style="position:absolute;left:94px;top:56px;" width="20" height="16" viewBox="0 0 20 16"><path d="M1.5 2.5 Q1.5 1.5 2.5 1.5 H7 L8.5 3 H13.5 Q14.5 3 14.5 4 V6 H5 L1.5 13.5 Z" fill="#fde3ae" stroke="#c68640" stroke-width="1.2" stroke-linejoin="round"/><path d="M1.5 13.8 L5 6 H18 L14.5 13.8 Z" fill="#ffe7b8" stroke="#c68640" stroke-width="1.2" stroke-linejoin="round"/></svg>
<svg style="position:absolute;left:120px;top:63px;" width="8" height="5" viewBox="0 0 8 5"><path d="M0 0 H7.5 L3.75 4.5 Z" fill="#404040"/></svg>
<svg style="position:absolute;left:137px;top:55px;" width="17" height="17" viewBox="0 0 17 17"><path d="M1.5 1.5 H15.5 V15.5 H3 L1.5 14 Z" fill="#8ab4f8" stroke="#5f5f5f" stroke-width="1.3"/><rect x="4.5" y="1.5" width="8" height="5.5" fill="#eef4fc" stroke="#5f5f5f" stroke-width="1"/><rect x="4" y="10.5" width="9" height="5" fill="#fff" stroke="#5f5f5f" stroke-width="1"/></svg>
<svg style="position:absolute;left:160px;top:55px;" width="20" height="18" viewBox="0 0 20 18"><path d="M1.5 2 H8 V12 H1.5 Z M3.5 4 H10 V14 H3.5 Z" fill="#f4f4f4" stroke="#c4c4c4"/><path d="M6 6.5 H14 L17.5 10 V17 H6 Z" fill="#f4f4f4" stroke="#bdbdbd" stroke-width="1.1"/><path d="M9 12 Q10 9 13 10.5 Q15 12 13.5 14" fill="none" stroke="#c0c0c0" stroke-width="1.3"/></svg>
<svg style="position:absolute;left:186px;top:63px;" width="8" height="5" viewBox="0 0 8 5"><path d="M0 0 H7.5 L3.75 4.5 Z" fill="#8a8a8a"/></svg>
<div style="position:absolute;left:202px;top:55px;width:1px;height:18px;background:#b9b9b9"></div>
<svg style="position:absolute;left:207px;top:56px;" width="20" height="18" viewBox="0 0 20 18"><rect x="5.5" y="1" width="9" height="4.5" fill="#fff" stroke="#6a6a6a" stroke-width="1.1"/><rect x="3.5" y="2.5" width="1.5" height="2.5" fill="#4a90d9"/><rect x="15" y="2.5" width="1.5" height="2.5" fill="#4a90d9"/><path d="M1 8 Q1 5.5 3 5.5 H17 Q19 5.5 19 8 V12 H1 Z" fill="#a8a8a8" stroke="#8a8a8a"/><rect x="16" y="7" width="2" height="2" fill="#a6d23a"/><rect x="4.5" y="9.5" width="11" height="6" fill="#fff" stroke="#6a6a6a" stroke-width="1.1"/><rect x="11" y="15.5" width="1.5" height="1.5" fill="#777"/><rect x="13.5" y="15.5" width="1.5" height="1.5" fill="#777"/><rect x="16" y="15.5" width="1.5" height="1.5" fill="#777"/></svg>
<svg style="position:absolute;left:233px;top:55px;" width="17" height="18" viewBox="0 0 17 18"><path d="M3.5 1.5 H11 L15.5 6 V16.5 H3.5 Z" fill="#fff" stroke="#5f5f5f" stroke-width="1.2"/><path d="M11 1.5 V6 H15.5" fill="none" stroke="#5f5f5f"/><rect x="0.5" y="2.5" width="7.5" height="3.5" fill="#e00"/><path d="M6 15 L9 9 L10 5.5 L10.5 9 L14 12 L8 11.5" fill="none" stroke="#e22" stroke-width="0.9"/></svg>
<div style="position:absolute;left:258px;top:55px;width:1px;height:18px;background:#b9b9b9"></div>
<svg style="position:absolute;left:264px;top:56px;" width="16" height="17" viewBox="0 0 16 17"><path d="M4 1 L11 11 M12 1 L5 11" stroke="#b4b4b4" stroke-width="1.3" fill="none"/><circle cx="3.8" cy="13.2" r="2.6" fill="none" stroke="#b4b4b4" stroke-width="1.3"/><circle cx="12.2" cy="13.2" r="2.6" fill="none" stroke="#b4b4b4" stroke-width="1.3"/></svg>
<svg style="position:absolute;left:289px;top:55px;" width="18" height="18" viewBox="0 0 18 18"><path d="M1.5 3.5 H7 L9.5 6 V16.5 H1.5 Z" fill="#f6f6f6" stroke="#b4b4b4" stroke-width="1.1"/><path d="M7 1.5 H12.5 L16 5 V13.5 H9.5 V6 L7 3.5 Z" fill="#f6f6f6" stroke="#b4b4b4" stroke-width="1.1"/><path d="M3 9.5 H8 M3 11.5 H8 M3 13.5 H8 M11 7.5 H14.5 M11 9.5 H14.5 M11 11.5 H14.5" stroke="#c0c0c0" stroke-width="0.8"/></svg>
<svg style="position:absolute;left:314px;top:54px;" width="19" height="20" viewBox="0 0 19 20"><path d="M1.5 4.5 Q1.5 3 3 3 H12.5 Q14 3 14 4.5 V8 H10.5 V17 H3 Q1.5 17 1.5 15.5 Z" fill="#e2e2e2" stroke="#b8b8b8" stroke-width="1.1"/><rect x="6" y="1" width="3.5" height="2.5" fill="#ccc"/><path d="M10.5 8.5 H15 L17.5 11 V18.5 H10.5 Z" fill="#f6f6f6" stroke="#b4b4b4" stroke-width="1.1"/></svg>
<svg style="position:absolute;left:339px;top:63px;" width="8" height="5" viewBox="0 0 8 5"><path d="M0 0 H7.5 L3.75 4.5 Z" fill="#8a8a8a"/></svg>
<div style="position:absolute;left:355px;top:55px;width:1px;height:18px;background:#b9b9b9"></div>
<svg style="position:absolute;left:360px;top:56px;" width="18" height="17" viewBox="0 0 18 17"><path d="M12 1 L16.5 5.5 L14 8 L9.5 3.5 Z" fill="#cfcfcf"/><path d="M9 6 L12 9 L6 15.5 L1 10.5 Z" fill="#dedede" stroke="#c2c2c2"/><path d="M3 12 L8 7 M5 14 L10 9" stroke="#c8c8c8" stroke-width="0.7"/></svg>
<div style="position:absolute;left:386px;top:55px;width:1px;height:18px;background:#b9b9b9"></div>
<svg style="position:absolute;left:393px;top:55px;" width="15" height="18" viewBox="0 0 15 18"><path d="M5 5.5 Q10 2 12 6 Q13.5 9.5 10 12.5 L5.5 16.5" fill="none" stroke="#b4b4b4" stroke-width="1.6"/><path d="M1 1.5 V8 H7 Z" fill="#b4b4b4"/></svg>
<svg style="position:absolute;left:416px;top:63px;" width="8" height="5" viewBox="0 0 8 5"><path d="M0 0 H7.5 L3.75 4.5 Z" fill="#8a8a8a"/></svg>
<svg style="position:absolute;left:432px;top:55px;" width="15" height="18" viewBox="0 0 15 18"><path d="M10 5.5 Q5 2 3 6 Q1.5 9.5 5 12.5 L9.5 16.5" fill="none" stroke="#b4b4b4" stroke-width="1.6"/><path d="M14 1.5 V8 H8 Z" fill="#b4b4b4"/></svg>
<svg style="position:absolute;left:456px;top:63px;" width="8" height="5" viewBox="0 0 8 5"><path d="M0 0 H7.5 L3.75 4.5 Z" fill="#8a8a8a"/></svg>
<div style="position:absolute;left:472px;top:55px;width:1px;height:18px;background:#b9b9b9"></div>
<svg style="position:absolute;left:478px;top:56px;" width="18" height="16" viewBox="0 0 18 16"><rect x="1.5" y="1.5" width="15" height="13" fill="#fff" stroke="#5f5f5f" stroke-width="1.2"/><rect x="2" y="2" width="14" height="2" fill="#5b9be6"/><text x="9" y="12.8" text-anchor="middle" font-family="Liberation Sans" font-weight="bold" font-size="8.5" fill="#2a6fb5">1:1</text></svg>
<svg style="position:absolute;left:503px;top:56px;" width="17" height="17" viewBox="0 0 17 17"><path d="M6 11 L1.5 15.5" stroke="#7a7a7a" stroke-width="2"/><circle cx="10.5" cy="6.3" r="5.2" fill="#fff" stroke="#6a6a6a" stroke-width="1.1"/><path d="M10.5 2.5 V10 M6.7 6.3 H14.3" stroke="#3a86c8" stroke-width="0.9"/><circle cx="10.5" cy="6.3" r="1.3" fill="#3a86c8"/></svg>
<svg style="position:absolute;left:528px;top:56px;" width="17" height="17" viewBox="0 0 17 17"><path d="M6 11 L1.5 15.5" stroke="#7a7a7a" stroke-width="2"/><circle cx="10.5" cy="6.3" r="5.2" fill="#fafafa" stroke="#6a6a6a" stroke-width="1.2"/></svg>
<div style="position:absolute;left:553px;top:55px;width:1px;height:18px;background:#b9b9b9"></div>
<svg style="position:absolute;left:557px;top:56px;" width="20" height="16" viewBox="0 0 20 16"><rect x="1.5" y="1" width="16.5" height="13.5" rx="1" fill="#fff" stroke="#5f5f5f" stroke-width="1.2"/><path d="M7.5 1 V14.5" stroke="#5f5f5f" stroke-width="1.2"/><path d="M4.5 5 L5.3 6.8 L7 7 L5.7 8.2 L6 10 L4.5 9 L3 10 L3.3 8.2 L2 7 L3.7 6.8 Z" fill="#f7b22b"/><path d="M11 5.5 L11.8 7.2 L13.5 7.4 L12.2 8.6 L12.5 10.3 L11 9.4 L9.5 10.3 L9.8 8.6 L8.5 7.4 L10.2 7.2 Z" fill="#f7b22b"/><circle cx="14" cy="4.5" r="0.8" fill="#f7b22b"/><circle cx="16" cy="8" r="0.8" fill="#f7b22b"/><circle cx="14.5" cy="11.5" r="0.8" fill="#f7b22b"/></svg>
<svg style="position:absolute;left:579px;top:62px;" width="8" height="5" viewBox="0 0 8 5"><path d="M0 0 H7.5 L3.75 4.5 Z" fill="#404040"/></svg>
<div style="position:absolute;left:596px;top:55px;width:1px;height:18px;background:#b9b9b9"></div>
<svg style="position:absolute;left:600px;top:56px;" width="20" height="16" viewBox="0 0 20 16"><rect x="1.5" y="1" width="16.5" height="13.5" fill="none" stroke="#bdbdbd" stroke-width="1.1"/><path d="M9.5 1 V14.5" stroke="#bdbdbd" stroke-width="1.1"/><path d="M1.5 7.5 H7 M5 5.5 L7 7.5 L5 9.5 M18 7.5 H12 M14 5.5 L12 7.5 L14 9.5" fill="none" stroke="#c0c0c0" stroke-width="1.1"/></svg>
<svg style="position:absolute;left:622px;top:62px;" width="8" height="5" viewBox="0 0 8 5"><path d="M0 0 H7.5 L3.75 4.5 Z" fill="#8a8a8a"/></svg>
<div style="position:absolute;left:639px;top:55px;width:1px;height:18px;background:#b9b9b9"></div>
<svg style="position:absolute;left:643px;top:54px;" width="19" height="19" viewBox="0 0 19 19"><rect x="2.5" y="3.5" width="14" height="14" fill="#fff" stroke="#5f5f5f" stroke-width="1.1"/><rect x="15.5" y="2" width="2.2" height="2.2" fill="#6aa0f0"/><rect x="1.5" y="16" width="2.2" height="2.2" fill="#6aa0f0"/><rect x="15.5" y="16" width="2.2" height="2.2" fill="#6aa0f0"/><path d="M3.5 0.5 V6.5 M0.5 3.5 H6.5" stroke="#f5c000" stroke-width="2"/></svg>
<svg style="position:absolute;left:665px;top:62px;" width="8" height="5" viewBox="0 0 8 5"><path d="M0 0 H7.5 L3.75 4.5 Z" fill="#404040"/></svg>
<div style="position:absolute;left:682px;top:55px;width:1px;height:18px;background:#b9b9b9"></div>
<svg style="position:absolute;left:687px;top:55px;" width="20" height="18" viewBox="0 0 20 18"><text x="0" y="7" font-family="Liberation Mono" font-size="7.5" fill="#333">ABC</text><path d="M4.5 9 L8.5 14.5 L18 3" fill="none" stroke="#5e97e3" stroke-width="2.4"/></svg>
<svg style="position:absolute;left:713px;top:63px;" width="8" height="5" viewBox="0 0 8 5"><path d="M0 0 H7.5 L3.75 4.5 Z" fill="#404040"/></svg>
<svg style="position:absolute;left:729px;top:55px;" width="18" height="18" viewBox="0 0 18 18"><path d="M1.5 4 L3 2 L4.5 4 V16.5 H1.5 Z" fill="#d4d4d4" stroke="#bdbdbd"/><path d="M6 2.5 L7.5 0.8 L9 2.5 V16.5 H6 Z" fill="#d4d4d4" stroke="#bdbdbd"/><path d="M10.5 4 L12 1.5 L13.5 4 V16.5 H10.5 Z" fill="#d4d4d4" stroke="#bdbdbd"/><path d="M13.5 6 L15 5.5 L16.5 6 V16.5 H13.5 Z" fill="#d4d4d4" stroke="#bdbdbd"/></svg>
<svg style="position:absolute;left:752px;top:54px;" width="19" height="19" viewBox="0 0 19 19"><circle cx="9.5" cy="6" r="5" fill="#f0f0f0" stroke="#c4c4c4"/><path d="M4.5 6 H14.5 M9.5 1 V11 M5.5 3.5 H13.5 M5.5 8.5 H13.5 M7 1.5 V10.5 M12 1.5 V10.5" stroke="#cbcbcb" stroke-width="0.6"/><path d="M1.5 7 V17.5 H17.5 V7 M1.5 16 Q5.5 14.5 9.5 16.5 Q13.5 14.5 17.5 16 M9.5 11 V16.5" fill="none" stroke="#c0c0c0" stroke-width="1.1"/></svg>
<svg style="position:absolute;left:774px;top:63px;" width="8" height="5" viewBox="0 0 8 5"><path d="M0 0 H7.5 L3.75 4.5 Z" fill="#8a8a8a"/></svg>
<div style="position:absolute;left:791px;top:55px;width:1px;height:18px;background:#b9b9b9"></div>
<svg style="position:absolute;left:798px;top:56px;" width="16" height="16" viewBox="0 0 16 16"><defs><linearGradient id="tg" x1="0" y1="0" x2="1" y2="1"><stop offset="0" stop-color="#ff5a5a"/><stop offset="1" stop-color="#c80a12"/></linearGradient><linearGradient id="pg" x1="0" y1="0" x2="1" y2="1"><stop offset="0" stop-color="#9cd83c"/><stop offset="1" stop-color="#5a9614"/></linearGradient></defs><rect x="1" y="1" width="14" height="14" fill="url(#tg)" stroke="#f4a0a0" stroke-width="0.5"/><path d="M4.3 4 H11.7 V6.3 H9.2 V13 H6.8 V6.3 H4.3 Z" fill="#fff"/></svg>
<svg style="position:absolute;left:823px;top:56px;" width="16" height="16" viewBox="0 0 16 16"><rect x="1" y="1" width="14" height="14" fill="url(#pg)" stroke="#c8e8a0" stroke-width="0.5"/><path d="M5.5 3.8 H9 Q12 3.8 12 6.9 Q12 10 9 10 H7.9 V12.8 H5.5 Z M7.9 5.8 V8 H8.8 Q9.7 8 9.7 6.9 Q9.7 5.8 8.8 5.8 Z" fill="#fff" fill-rule="evenodd"/></svg>
<svg style="position:absolute;left:845px;top:56px;" width="9" height="7" viewBox="0 0 9 7"><path d="M0.8 0.8 L3.3 3.3 L0.8 5.8 M4.3 0.8 L6.8 3.3 L4.3 5.8" fill="none" stroke="#707070" stroke-width="1.3"/></svg>
<div style="position:absolute;left:51px;top:80px;width:215px;height:25px;background:#fff;border:1px solid #a9bcd5;box-sizing:border-box"></div>
<div style="position:absolute;left:54px;top:83px;width:37px;height:19px;background:#3597fb"></div>
<div style="position:absolute;left:55px;top:86.73px;font-size:13.2px;line-height:13.2px;color:#fff;white-space:nowrap;">Calibri</div>
<svg style="position:absolute;left:251px;top:89px;" width="12" height="8" viewBox="0 0 12 8"><path d="M1.8 1.5 L6 5.5 L10.2 1.5" fill="none" stroke="#333" stroke-width="1.1"/></svg>
<div style="position:absolute;left:271px;top:80px;width:46px;height:26px;background:#fff;border:1px solid #a9bcd5;box-sizing:border-box"></div>
<div style="position:absolute;left:274px;top:86.83px;font-size:13.2px;line-height:13.2px;color:#000;white-space:nowrap;">18</div>
<svg style="position:absolute;left:300px;top:89px;" width="12" height="8" viewBox="0 0 12 8"><path d="M1.5 1.5 L6 6 L10.5 1.5" fill="none" stroke="#333" stroke-width="1.4"/></svg>
<div style="position:absolute;left:328.5px;top:86.57px;font-size:13.5px;line-height:13.5px;color:#4a4a4a;white-space:nowrap;font-weight:bold">B</div>
<svg style="position:absolute;left:353px;top:87px;" width="9" height="12" viewBox="0 0 9 12"><path d="M7 0.8 L3 11.2" stroke="#4a4a4a" stroke-width="1.8"/></svg>
<svg style="position:absolute;left:376px;top:87px;" width="12" height="14" viewBox="0 0 12 14"><path d="M2 1 V7 Q2 10.5 6 10.5 Q10 10.5 10 7 V1" fill="none" stroke="#4a4a4a" stroke-width="1.7"/><rect x="1" y="12" width="10" height="1.2" fill="#4a4a4a"/></svg>
<svg style="position:absolute;left:397.5px;top:91px;" width="8" height="5" viewBox="0 0 8 5"><path d="M0 0 H7.5 L3.75 4.5 Z" fill="#404040"/></svg>
<svg style="position:absolute;left:418px;top:87px;" width="12" height="13" viewBox="0 0 12 13"><path d="M1 1 L9.5 11.5 M9.5 1 L1 11.5" stroke="#4a4a4a" stroke-width="1.8"/><path d="M4 12.5 L9 6 M6 4 L11 12.5" stroke="#9a9a9a" stroke-width="0.8"/></svg>
<svg style="position:absolute;left:442px;top:87px;" width="12" height="13" viewBox="0 0 12 13"><path d="M2 1 L10 11.5 M10 1 L2 11.5" stroke="#fff" stroke-width="1.8"/></svg>
<div style="position:absolute;left:464px;top:83px;width:1px;height:19px;background:#b9b9b9"></div>
<svg style="position:absolute;left:469px;top:86px;" width="20" height="16" viewBox="0 0 20 16"><path d="M5.5 11 L9.5 1 L13.5 11 M7 7.5 H12" fill="none" stroke="#4a4a4a" stroke-width="1.6"/><rect x="1" y="10.8" width="18" height="4.2" fill="#f00"/></svg>
<svg style="position:absolute;left:495px;top:91px;" width="8" height="5" viewBox="0 0 8 5"><path d="M0 0 H7.5 L3.75 4.5 Z" fill="#404040"/></svg>
<div style="position:absolute;left:511px;top:83px;width:1px;height:19px;background:#b9b9b9"></div>
<svg style="position:absolute;left:520px;top:82px;" width="15" height="18" viewBox="0 0 15 18"><path d="M1.5 16 L5.5 6 L9.5 16 M3 12.5 H8" fill="none" stroke="#4a4a4a" stroke-width="1.6"/><path d="M12 1 V5.5 M9.8 3.2 H14.2" stroke="#3a86c8" stroke-width="1.2"/></svg>
<svg style="position:absolute;left:546px;top:84px;" width="14" height="16" viewBox="0 0 14 16"><path d="M1.5 14 L5 5 L8.5 14 M2.8 11 H7.2" fill="none" stroke="#4a4a4a" stroke-width="1.5"/><path d="M9.5 2.5 H13.5" stroke="#3a86c8" stroke-width="1.2"/></svg>
<svg style="position:absolute;left:567px;top:84px;" width="18" height="17" viewBox="0 0 18 17"><text x="0.5" y="9" font-family="Liberation Sans" font-weight="bold" font-size="10" fill="#4a4a4a">AV</text><path d="M2 12.5 H15.5" stroke="#3a86c8" stroke-width="1.6"/><path d="M0.8 12.5 L3.8 10 V15 Z M16.8 12.5 L13.8 10 V15 Z" fill="#3a86c8"/></svg>
<svg style="position:absolute;left:592px;top:91px;" width="8" height="5" viewBox="0 0 8 5"><path d="M0 0 H7.5 L3.75 4.5 Z" fill="#404040"/></svg>
<div style="position:absolute;left:607px;top:80px;width:24px;height:24px;background:#cfe2f7;border:1.5px solid #5b9ee6;box-sizing:border-box"></div>
<svg style="position:absolute;left:613px;top:86px;" width="14" height="12" viewBox="0 0 14 12"><rect x="0" y="0" width="12" height="1.1" fill="#5a5a5a"/><rect x="0" y="2" width="8" height="1.1" fill="#5a5a5a"/><rect x="0" y="4" width="12" height="1.1" fill="#5a5a5a"/><rect x="0" y="6" width="8" height="1.1" fill="#5a5a5a"/><rect x="0" y="8" width="12" height="1.1" fill="#5a5a5a"/><rect x="0" y="10" width="8" height="1.1" fill="#5a5a5a"/></svg>
<svg style="position:absolute;left:638px;top:86px;" width="14" height="12" viewBox="0 0 14 12"><rect x="0" y="0" width="12" height="1.1" fill="#5a5a5a"/><rect x="2" y="2" width="8" height="1.1" fill="#5a5a5a"/><rect x="0" y="4" width="12" height="1.1" fill="#5a5a5a"/><rect x="2" y="6" width="8" height="1.1" fill="#5a5a5a"/><rect x="0" y="8" width="12" height="1.1" fill="#5a5a5a"/><rect x="2" y="10" width="8" height="1.1" fill="#5a5a5a"/></svg>
<svg style="position:absolute;left:663px;top:86px;" width="14" height="12" viewBox="0 0 14 12"><rect x="0" y="0" width="12" height="1.1" fill="#5a5a5a"/><rect x="4" y="2" width="8" height="1.1" fill="#5a5a5a"/><rect x="0" y="4" width="12" height="1.1" fill="#5a5a5a"/><rect x="4" y="6" width="8" height="1.1" fill="#5a5a5a"/><rect x="0" y="8" width="12" height="1.1" fill="#5a5a5a"/><rect x="4" y="10" width="8" height="1.1" fill="#5a5a5a"/></svg>
<svg style="position:absolute;left:688px;top:86px;" width="14" height="12" viewBox="0 0 14 12"><rect x="0" y="0" width="12" height="1.1" fill="#5a5a5a"/><rect x="0" y="2" width="12" height="1.1" fill="#5a5a5a"/><rect x="0" y="4" width="12" height="1.1" fill="#5a5a5a"/><rect x="0" y="6" width="12" height="1.1" fill="#5a5a5a"/><rect x="0" y="8" width="12" height="1.1" fill="#5a5a5a"/><rect x="0" y="10" width="12" height="1.1" fill="#5a5a5a"/></svg>
<svg style="position:absolute;left:714px;top:86px;" width="14" height="13" viewBox="0 0 14 13"><rect x="0.8" y="0.5" width="1.8" height="1.8" fill="#2a6ab0"/><rect x="0.8" y="5.5" width="1.8" height="1.8" fill="#2a6ab0"/><rect x="0.8" y="10.5" width="1.8" height="1.8" fill="#2a6ab0"/><path d="M5 1.4 H13 M5 6.4 H13 M5 11.4 H13" stroke="#5a5a5a" stroke-width="1"/></svg>
<svg style="position:absolute;left:737px;top:91px;" width="8" height="5" viewBox="0 0 8 5"><path d="M0 0 H7.5 L3.75 4.5 Z" fill="#404040"/></svg>
<svg style="position:absolute;left:754px;top:84px;" width="15" height="17" viewBox="0 0 15 17"><text x="0" y="6" font-family="Liberation Sans" font-weight="bold" font-size="6" fill="#2a6ab0">1</text><text x="0" y="11" font-family="Liberation Sans" font-weight="bold" font-size="6" fill="#2a6ab0">2</text><text x="0" y="16.5" font-family="Liberation Sans" font-weight="bold" font-size="6" fill="#2a6ab0">3</text><path d="M6 3.4 H14 M6 8.4 H14 M6 13.4 H14" stroke="#5a5a5a" stroke-width="1"/></svg>
<svg style="position:absolute;left:778px;top:91px;" width="8" height="5" viewBox="0 0 8 5"><path d="M0 0 H7.5 L3.75 4.5 Z" fill="#404040"/></svg>
<div style="position:absolute;left:794px;top:83px;width:1px;height:19px;background:#b9b9b9"></div>
<svg style="position:absolute;left:800px;top:85px;" width="17" height="15" viewBox="0 0 17 15"><path d="M1 3 L4 0.5 V5.5 Z" fill="#b0b0b0"/><path d="M3 3 H6" stroke="#b0b0b0" stroke-width="1.6"/><path d="M8 1.5 H15 M8 4.5 H15 M0.5 7.5 H15 M0.5 10.5 H15 M0.5 13.5 H15" stroke="#a8a8a8" stroke-width="1"/></svg>
<svg style="position:absolute;left:825px;top:85px;" width="17" height="15" viewBox="0 0 17 15"><path d="M7 3 L4 0.5 V5.5 Z" fill="#b0b0b0"/><path d="M1 3 H5" stroke="#b0b0b0" stroke-width="1.6"/><path d="M8 1.5 H15 M8 4.5 H15 M0.5 7.5 H15 M0.5 10.5 H15 M0.5 13.5 H15" stroke="#a8a8a8" stroke-width="1"/></svg>
<div style="position:absolute;left:850px;top:83px;width:1px;height:19px;background:#b9b9b9"></div>
<svg style="position:absolute;left:856px;top:83px;" width="18" height="18" viewBox="0 0 18 18"><rect x="1.5" y="1.5" width="15" height="15" fill="#fff" stroke="#5a5a5a" stroke-width="1.3"/><path d="M4.5 13.5 L9 3.5 L13.5 13.5 M6 10.3 H12" fill="none" stroke="#4a4a4a" stroke-width="1.3"/></svg>
<svg style="position:absolute;left:881px;top:83px;" width="18" height="18" viewBox="0 0 18 18"><rect x="1.5" y="1.5" width="15" height="15" fill="#fff" stroke="#5a5a5a" stroke-width="1.3"/><path d="M6 4.5 H14 M3.5 6.5 H14 M3.5 8.5 H6 M3.5 10.5 H6 M3.5 12.5 H6 M3.5 14.5 H6" stroke="#8a8a8a" stroke-width="0.7"/><path d="M10 7 H14 M11 7 V16 M13 7 V16" stroke="#2f7bbd" stroke-width="1.2"/><circle cx="9.5" cy="9" r="2.2" fill="#2f7bbd"/></svg>
<svg style="position:absolute;left:908px;top:83px;" width="14" height="18" viewBox="0 0 14 18"><path d="M1.5 1.5 H8 L12.5 6 V16.5 H1.5 Z" fill="#f6f6f6" stroke="#b0b0b0" stroke-width="1.1"/><path d="M8 1.5 V6 H12.5" fill="none" stroke="#b0b0b0"/><path d="M3 8 H6 M7.5 8 H10.5 M3 10 H6 M7.5 10 H10.5 M3 12 H6 M7.5 12 H10.5 M3 14 H6 M7.5 14 H10.5" stroke="#b4b4b4" stroke-width="0.9"/></svg>
<svg style="position:absolute;left:931px;top:91px;" width="8" height="5" viewBox="0 0 8 5"><path d="M0 0 H7.5 L3.75 4.5 Z" fill="#8a8a8a"/></svg>
<svg style="position:absolute;left:945px;top:84px;" width="9" height="7" viewBox="0 0 9 7"><path d="M0.8 0.8 L3.3 3.3 L0.8 5.8 M4.3 0.8 L6.8 3.3 L4.3 5.8" fill="none" stroke="#707070" stroke-width="1.3"/></svg>
<svg style="position:absolute;left:357px;top:116px;" width="8" height="12" viewBox="0 0 8 12"><path d="M0 0.5 L5.5 5.5 L0 10.5" fill="none" stroke="#333" stroke-width="0.9"/></svg>
<svg style="position:absolute;left:365px;top:119px;" width="8" height="5" viewBox="0 0 8 5"><path d="M0 0 H7.5 L3.75 4.5 Z" fill="#404040"/></svg>
<svg style="position:absolute;left:384px;top:112px;" width="15" height="17" viewBox="0 0 15 17"><path d="M1.5 15 L7.5 1.5 L13.5 15 M4 10 H11" fill="none" stroke="#3b8fd6" stroke-width="2.3"/></svg>
<div style="position:absolute;left:407px;top:113px;width:1px;height:17px;background:#b9b9b9"></div>
<svg style="position:absolute;left:413px;top:112px;" width="19" height="18" viewBox="0 0 19 18"><rect x="1.5" y="1.5" width="14" height="13" fill="none" stroke="#c4c4c4" stroke-dasharray="2 2"/><circle cx="14" cy="13.5" r="3.8" fill="#b8b8b8"/><path d="M14 12 V16" stroke="#fff" stroke-width="1.3"/><circle cx="14" cy="10.5" r="0.7" fill="#fff"/></svg>
<div style="position:absolute;left:437px;top:109px;width:121px;height:25px;background:#fff;border:1px solid #a9bcd5;box-sizing:border-box"></div>
<svg style="position:absolute;left:542px;top:117px;" width="12" height="8" viewBox="0 0 12 8"><path d="M1.5 1.5 L6 6 L10.5 1.5" fill="none" stroke="#333" stroke-width="1.4"/></svg>
<svg style="position:absolute;left:564px;top:113px;" width="15" height="15" viewBox="0 0 15 15"><rect x="1" y="1" width="13" height="13" fill="#fff" stroke="#6a6a6a" stroke-width="1.1"/><path d="M4.25 1 V14 M7.5 1 V14 M10.75 1 V14 M1 4.25 H14 M1 7.5 H14 M1 10.75 H14" stroke="#6a6a6a" stroke-width="0.9"/></svg>
<svg style="position:absolute;left:588px;top:121px;" width="8" height="5" viewBox="0 0 8 5"><path d="M0 0 H7.5 L3.75 4.5 Z" fill="#404040"/></svg>
<svg style="position:absolute;left:602px;top:113px;" width="9" height="7" viewBox="0 0 9 7"><path d="M0.8 0.8 L3.3 3.3 L0.8 5.8 M4.3 0.8 L6.8 3.3 L4.3 5.8" fill="none" stroke="#707070" stroke-width="1.3"/></svg>
<div style="position:absolute;left:51px;top:104px;width:306px;height:308px;background:#fff;border:1px solid #000;box-sizing:border-box"></div>
<div style="position:absolute;left:341px;top:105px;width:15px;height:306px;background:#ececec"></div>
<div style="position:absolute;left:341px;top:119px;width:15px;height:20px;background:#c8c8c8"></div>
<svg style="position:absolute;left:341px;top:105px;" width="15" height="16" viewBox="0 0 15 16"><path d="M4 10 L7.5 6 L11 10" fill="none" stroke="#444" stroke-width="1.8"/></svg>
<svg style="position:absolute;left:341px;top:394px;" width="15" height="16" viewBox="0 0 15 16"><path d="M4 7 L7.5 11 L11 7" fill="none" stroke="#444" stroke-width="1.8"/></svg>
<div style="position:absolute;left:52px;top:123px;width:289px;height:17px;background:#3597fb"></div>
<div style="position:absolute;left:52px;top:140px;width:289px;height:1px;background:#000"></div>
<div style="position:absolute;left:80px;top:108.22px;font-family:'Liberation Sans',sans-serif;font-size:12.5px;line-height:12.5px;color:#000;white-space:nowrap;transform:scaleX(1.03);transform-origin:0 0;font-style:italic">Comic Sans MS</div>
<svg style="position:absolute;left:56px;top:106.8px;" width="15" height="17" viewBox="0 0 15 17"><text x="0.4" y="12.3" font-family="Liberation Serif" font-weight="bold" font-size="13.6" fill="#acacac">S</text><text x="5.7" y="14.8" font-family="Liberation Serif" font-weight="bold" font-size="14" fill="#d8001c" transform="translate(5.7 0) scale(0.92 1) translate(-5.7 0)">F</text></svg>
<div style="position:absolute;left:80px;top:125.92px;font-family:'Liberation Sans',sans-serif;font-size:12.5px;line-height:12.5px;color:#fff;white-space:nowrap;transform:scaleX(1.04);transform-origin:0 0;">Calibri</div>
<svg style="position:absolute;left:56px;top:124.5px;" width="15" height="17" viewBox="0 0 15 17"><text x="0.4" y="12.3" font-family="Liberation Serif" font-weight="bold" font-size="13.6" fill="#acacac">S</text><text x="5.7" y="14.8" font-family="Liberation Serif" font-weight="bold" font-size="14" fill="#d8001c" transform="translate(5.7 0) scale(0.92 1) translate(-5.7 0)">F</text></svg>
<div style="position:absolute;left:80px;top:145.32px;font-family:'Liberation Mono',monospace;font-size:12.5px;line-height:12.5px;color:#000;white-space:nowrap;transform:scaleX(1.066);transform-origin:0 0;">Andale Mono</div>
<svg style="position:absolute;left:56px;top:142.9px;" width="15" height="17" viewBox="0 0 15 17"><text x="0.4" y="12.3" font-family="Liberation Serif" font-weight="bold" font-size="13.6" fill="#acacac">S</text><text x="5.7" y="14.8" font-family="Liberation Serif" font-weight="bold" font-size="14" fill="#d8001c" transform="translate(5.7 0) scale(0.92 1) translate(-5.7 0)">F</text></svg>
<div style="position:absolute;left:80px;top:161.90px;font-family:'Liberation Sans',sans-serif;font-size:13px;line-height:13px;color:#000;white-space:nowrap;transform:scaleX(1.1);transform-origin:0 0;">Arial</div>
<svg style="position:absolute;left:56px;top:160.9px;" width="15" height="17" viewBox="0 0 15 17"><text x="0.4" y="12.3" font-family="Liberation Serif" font-weight="bold" font-size="13.6" fill="#acacac">S</text><text x="5.7" y="14.8" font-family="Liberation Serif" font-weight="bold" font-size="14" fill="#d8001c" transform="translate(5.7 0) scale(0.92 1) translate(-5.7 0)">F</text></svg>
<div style="position:absolute;left:80px;top:180.44px;font-family:'Liberation Sans',sans-serif;font-size:12px;line-height:12px;color:#000;white-space:nowrap;transform:scaleX(1.25);transform-origin:0 0;font-weight:bold">Arial Black</div>
<svg style="position:absolute;left:56px;top:178.6px;" width="15" height="17" viewBox="0 0 15 17"><text x="0.4" y="12.3" font-family="Liberation Serif" font-weight="bold" font-size="13.6" fill="#acacac">S</text><text x="5.7" y="14.8" font-family="Liberation Serif" font-weight="bold" font-size="14" fill="#d8001c" transform="translate(5.7 0) scale(0.92 1) translate(-5.7 0)">F</text></svg>
<div style="position:absolute;left:80px;top:196.90px;font-family:'Liberation Sans',sans-serif;font-size:13px;line-height:13px;color:#000;white-space:nowrap;transform:scaleX(0.87);transform-origin:0 0;">Arial Narrow</div>
<svg style="position:absolute;left:56px;top:195.9px;" width="15" height="17" viewBox="0 0 15 17"><text x="0.4" y="12.3" font-family="Liberation Serif" font-weight="bold" font-size="13.6" fill="#acacac">S</text><text x="5.7" y="14.8" font-family="Liberation Serif" font-weight="bold" font-size="14" fill="#d8001c" transform="translate(5.7 0) scale(0.92 1) translate(-5.7 0)">F</text></svg>
<div style="position:absolute;left:80px;top:213.40px;font-family:'Liberation Serif',serif;font-size:13.5px;line-height:13.5px;color:#000;white-space:nowrap;transform:scaleX(1.14);transform-origin:0 0;">Asana Math</div>
<svg style="position:absolute;left:56px;top:212.7px;" width="15" height="17" viewBox="0 0 15 17"><text x="0.4" y="12.3" font-family="Liberation Serif" font-weight="bold" font-size="13.6" fill="#acacac">S</text><text x="5.7" y="14.8" font-family="Liberation Serif" font-weight="bold" font-size="14" fill="#d8001c" transform="translate(5.7 0) scale(0.92 1) translate(-5.7 0)">F</text></svg>
<div style="position:absolute;left:80px;top:234.12px;font-family:'Liberation Sans',sans-serif;font-size:12.5px;line-height:12.5px;color:#000;white-space:nowrap;transform:scaleX(1.12);transform-origin:0 0;">Avignon Pro</div>
<svg style="position:absolute;left:56px;top:232.7px;" width="15" height="17" viewBox="0 0 15 17"><text x="0.4" y="12.3" font-family="Liberation Serif" font-weight="bold" font-size="13.6" fill="#acacac">S</text><text x="5.7" y="14.8" font-family="Liberation Serif" font-weight="bold" font-size="14" fill="#d8001c" transform="translate(5.7 0) scale(0.92 1) translate(-5.7 0)">F</text></svg>
<div style="position:absolute;left:80px;top:252.52px;font-family:'Liberation Sans',sans-serif;font-size:12.5px;line-height:12.5px;color:#000;white-space:nowrap;transform:scaleX(1.03);transform-origin:0 0;font-weight:bold">Avignon Pro Demi</div>
<svg style="position:absolute;left:56px;top:251.10000000000002px;" width="15" height="17" viewBox="0 0 15 17"><text x="0.4" y="12.3" font-family="Liberation Serif" font-weight="bold" font-size="13.6" fill="#acacac">S</text><text x="5.7" y="14.8" font-family="Liberation Serif" font-weight="bold" font-size="14" fill="#d8001c" transform="translate(5.7 0) scale(0.92 1) translate(-5.7 0)">F</text></svg>
<div style="position:absolute;left:80px;top:270.32px;font-family:'Liberation Sans',sans-serif;font-size:12.5px;line-height:12.5px;color:#000;white-space:nowrap;transform:scaleX(1.05);transform-origin:0 0;font-weight:bold">Avignon Pro Medium</div>
<svg style="position:absolute;left:56px;top:268.9px;" width="15" height="17" viewBox="0 0 15 17"><text x="0.4" y="12.3" font-family="Liberation Serif" font-weight="bold" font-size="13.6" fill="#acacac">S</text><text x="5.7" y="14.8" font-family="Liberation Serif" font-weight="bold" font-size="14" fill="#d8001c" transform="translate(5.7 0) scale(0.92 1) translate(-5.7 0)">F</text></svg>
<div style="position:absolute;left:80px;top:286.24px;font-family:'Liberation Sans',sans-serif;font-size:12px;line-height:12px;color:#a6a6a6;white-space:nowrap;transform:scaleX(1.09);transform-origin:0 0;">Avignon Pro Xlight</div>
<svg style="position:absolute;left:56px;top:284.4px;" width="15" height="17" viewBox="0 0 15 17"><text x="0.4" y="12.3" font-family="Liberation Serif" font-weight="bold" font-size="13.6" fill="#acacac">S</text><text x="5.7" y="14.8" font-family="Liberation Serif" font-weight="bold" font-size="14" fill="#d8001c" transform="translate(5.7 0) scale(0.92 1) translate(-5.7 0)">F</text></svg>
<div style="position:absolute;left:80px;top:305.01px;font-family:'Liberation Serif',serif;font-size:13px;line-height:13px;color:#000;white-space:nowrap;transform:scaleX(1.07);transform-origin:0 0;">Basic Roman</div>
<svg style="position:absolute;left:56px;top:303.9px;" width="15" height="17" viewBox="0 0 15 17"><text x="0.4" y="12.3" font-family="Liberation Serif" font-weight="bold" font-size="13.6" fill="#acacac">S</text><text x="5.7" y="14.8" font-family="Liberation Serif" font-weight="bold" font-size="14" fill="#d8001c" transform="translate(5.7 0) scale(0.92 1) translate(-5.7 0)">F</text></svg>
<div style="position:absolute;left:80px;top:322.76px;font-family:'Liberation Sans',sans-serif;font-size:12.8px;line-height:12.8px;color:#000;white-space:nowrap;transform:scaleX(1.09);transform-origin:0 0;">Basic Sans</div>
<svg style="position:absolute;left:56px;top:321.6px;" width="15" height="17" viewBox="0 0 15 17"><text x="0.4" y="12.3" font-family="Liberation Serif" font-weight="bold" font-size="13.6" fill="#acacac">S</text><text x="5.7" y="14.8" font-family="Liberation Serif" font-weight="bold" font-size="14" fill="#d8001c" transform="translate(5.7 0) scale(0.92 1) translate(-5.7 0)">F</text></svg>
<div style="position:absolute;left:80px;top:339.60px;font-family:'Liberation Sans',sans-serif;font-size:13px;line-height:13px;color:#000;white-space:nowrap;transform:scaleX(1.215);transform-origin:0 0;font-weight:bold">Basic Sans Black</div>
<svg style="position:absolute;left:56px;top:338.6px;" width="15" height="17" viewBox="0 0 15 17"><text x="0.4" y="12.3" font-family="Liberation Serif" font-weight="bold" font-size="13.6" fill="#acacac">S</text><text x="5.7" y="14.8" font-family="Liberation Serif" font-weight="bold" font-size="14" fill="#d8001c" transform="translate(5.7 0) scale(0.92 1) translate(-5.7 0)">F</text></svg>
<div style="position:absolute;left:80px;top:358.92px;font-family:'Liberation Sans',sans-serif;font-size:12.5px;line-height:12.5px;color:#000;white-space:nowrap;transform:scaleX(0.9);transform-origin:0 0;">Basic Sans Narrow</div>
<svg style="position:absolute;left:56px;top:357.5px;" width="15" height="17" viewBox="0 0 15 17"><text x="0.4" y="12.3" font-family="Liberation Serif" font-weight="bold" font-size="13.6" fill="#acacac">S</text><text x="5.7" y="14.8" font-family="Liberation Serif" font-weight="bold" font-size="14" fill="#d8001c" transform="translate(5.7 0) scale(0.92 1) translate(-5.7 0)">F</text></svg>
<div style="position:absolute;left:80px;top:376.20px;font-family:'Liberation Serif',serif;font-size:13.5px;line-height:13.5px;color:#000;white-space:nowrap;transform:scaleX(1.13);transform-origin:0 0;">Bitstream Charter</div>
<svg style="position:absolute;left:56px;top:375.5px;" width="15" height="17" viewBox="0 0 15 17"><text x="0.4" y="12.3" font-family="Liberation Serif" font-weight="bold" font-size="13.6" fill="#acacac">S</text><text x="5.7" y="14.8" font-family="Liberation Serif" font-weight="bold" font-size="14" fill="#d8001c" transform="translate(5.7 0) scale(0.92 1) translate(-5.7 0)">F</text></svg>
<div style="position:absolute;left:80px;top:395.10px;font-family:'Liberation Serif',serif;font-size:13.5px;line-height:13.5px;color:#000;white-space:nowrap;transform:scaleX(1.08);transform-origin:0 0;">Caladea</div>
<svg style="position:absolute;left:56px;top:394.4px;" width="15" height="17" viewBox="0 0 15 17"><text x="0.4" y="12.3" font-family="Liberation Serif" font-weight="bold" font-size="13.6" fill="#acacac">S</text><text x="5.7" y="14.8" font-family="Liberation Serif" font-weight="bold" font-size="14" fill="#d8001c" transform="translate(5.7 0) scale(0.92 1) translate(-5.7 0)">F</text></svg>
<svg style="position:absolute;left:254px;top:89px;" width="22" height="30" viewBox="0 0 22 30"><path d="M2.3 2.2 L2.3 24.2 L7.3 19.8 L10.8 27 Q11.8 28.3 13.3 27.6 Q14.6 26.8 14 25.4 L10.6 18.4 L17.8 18.2 Z" fill="#f2f2f2" stroke="#000" stroke-width="1.5" stroke-linejoin="round"/></svg>
</body></html>
